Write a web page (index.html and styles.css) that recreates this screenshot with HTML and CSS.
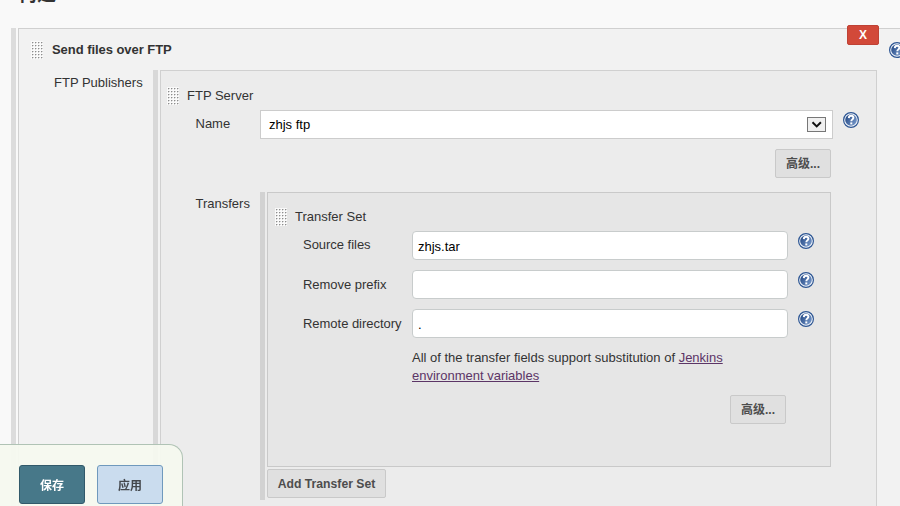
FILE: index.html
```
<!DOCTYPE html>
<html lang="zh-CN">
<head>
<meta charset="utf-8">
<title>构建</title>
<link rel="stylesheet" href="styles.css">
</head>
<body>
<svg class="defs" aria-hidden="true">
  <defs>
    <linearGradient id="blue" x1="0" y1="0" x2="1" y2="0.6"><stop offset="0" stop-color="#1f4480"/><stop offset="1" stop-color="#6f91c4"/></linearGradient>
    <symbol id="help" viewBox="0 0 16 16">
      <circle cx="8" cy="8" r="7.4" fill="#f4f7fb" stroke="#2c5593" stroke-width="1.2"/>
      <circle cx="8" cy="8" r="5.8" fill="url(#blue)"/>
      <path d="M5.8 6.1C5.9 4.4 7 3.8 8.1 3.8c1.3 0 2.3.8 2.3 2 0 1.5-2.1 1.7-2.1 3.4" fill="none" stroke="#fff" stroke-width="1.9"/>
      <rect x="7.3" y="10.4" width="2" height="2" fill="#fff"/>
    </symbol>
    <pattern id="dots" width="3" height="3" patternUnits="userSpaceOnUse"><rect width="3" height="3" fill="#fafafa"/><rect x="1" y="1" width="1" height="1" fill="#8d8d8d"/><rect x="2" y="1" width="1" height="1" fill="#d0d0d0"/><rect x="1" y="2" width="1" height="1" fill="#d8d8d8"/></pattern>
    <symbol id="grip" viewBox="0 0 12 18"><rect width="12" height="18" fill="url(#dots)"/></symbol>
  </defs>
</svg>
<h2 class="heading">构建</h2>
<main class="group builder">
  <section class="panel builder-panel">
    <button class="close">X</button>
    <svg class="help builder-help"><use href="#help"/></svg>
    <header class="title builder-title"><svg class="grip"><use href="#grip"/></svg><b>Send files over FTP</b></header>
    <div class="publishers">
      <div class="label publishers-label">FTP Publishers</div>
      <div class="group publisher-group">
        <section class="panel server-panel">
          <header class="title"><svg class="grip"><use href="#grip"/></svg><span>FTP Server</span></header>
          <div class="row server-row">
            <div class="label server-label">Name</div>
            <div class="select"><span>zhjs ftp</span><span class="arrow"><svg viewBox="0 0 17 13"><path d="M4.5 4.2l4.2 4.2 4.2-4.2" fill="none" stroke="#111" stroke-width="2"/></svg></span></div>
            <svg class="help"><use href="#help"/></svg>
          </div>
          <div class="actions server-actions"><button class="button">高级...</button></div>
          <div class="row">
            <div class="label server-label transfers-label">Transfers</div>
            <div class="group transfer-group">
              <section class="panel transfer-panel">
                <header class="title"><svg class="grip"><use href="#grip"/></svg><span>Transfer Set</span></header>
                <div class="row field"><div class="label">Source files</div><div class="input">zhjs.tar</div><svg class="help"><use href="#help"/></svg></div>
                <div class="row field"><div class="label">Remove prefix</div><div class="input"></div><svg class="help"><use href="#help"/></svg></div>
                <div class="row field"><div class="label">Remote directory</div><div class="input">.</div><svg class="help"><use href="#help"/></svg></div>
                <p class="note">All of the transfer fields support substitution of <a href="#">Jenkins environment variables</a></p>
                <div class="actions transfer-actions"><button class="button">高级...</button></div>
              </section>
              <button class="button add">Add Transfer Set</button>
            </div>
          </div>
        </section>
      </div>
    </div>
  </section>
</main>
<footer class="savebar"><button class="save">保存</button><button class="apply">应用</button></footer>
</body>
</html>
```
FILE: styles.css
```
* { box-sizing: border-box; }
body {
  margin: 0; height: 506px; overflow: hidden; background: #f9f9f9; color: #333;
  font: 13px/18px "Liberation Sans", "Noto Sans CJK SC", sans-serif;
  display: flex; flex-direction: column;
}
svg { display: block; }
button { font: inherit; margin: 0; padding: 0; }
.defs { position: absolute; width: 0; height: 0; }
.heading { flex: none; margin: -19px 0 0 18px; height: 47px; font-size: 19px; line-height: 28px; }
.group { border-left: 5px solid #dcdcdc; padding-left: 2px; }
.builder { flex: none; margin-left: 11px; width: 905px; height: 500px; }
.panel { position: relative; border: 1px solid #d0d0d0; }
.builder-panel { height: 500px; background: #f2f2f2; }
.title { display: flex; align-items: center; height: 20px; gap: 8px; margin-left: -1px; }
.transfer-panel .title { margin-left: 0; }
.grip { width: 12px; height: 18px; flex: none; }
.title.builder-title { margin: 11px 0 0 12px; }
.builder-title { gap: 9px; letter-spacing: -.05px; }
.builder-title .grip { margin-top: -1px; }
.publishers { display: flex; margin-top: 10px; }
.label { flex: none; line-height: 18px; }
.publishers-label { width: 134px; padding: 4px 0 0 35px; white-space: nowrap; }
.publisher-group { width: 724px; border-left-color: #d8d8d8; }
.server-panel { height: 460px; background: #ececec; padding: 15px 0 0 7px; }
.row { display: flex; align-items: flex-start; }
.server-row { margin-top: 4px; }
.server-label { width: 92px; padding: 5px 0 0 27.5px; }
.transfers-label { padding-top: 3px; }
.select {
  width: 573px; height: 29px; background: #fff; border: 1px solid #ccc; color: #000;
  display: flex; align-items: center; justify-content: space-between; padding: 0 6px 0 8px;
}
.arrow { width: 19px; height: 15px; border: 1px solid #777; background: #f0f0f0; }
.arrow svg { width: 17px; height: 13px; }
.help { width: 16px; height: 16px; flex: none; margin: 2px 0 0 10px; }
.actions { display: flex; justify-content: flex-end; }
.server-actions { margin: 10px 45px 14px 0; }
.button {
  width: 56px; height: 29px; background: #e0e0e0; border: 1px solid #c9c9c9; border-radius: 2px;
  color: #4d4d4d; font-weight: bold; font-size: 12px;
}
.transfer-group { width: 571px; height: 308px; border-left-color: #d2d2d2; }
.transfer-panel { height: 275px; background: #e6e6e6; border-color: #c9c9c9; padding: 14px 0 0 7px; margin-bottom: 2px; }
.field { margin-top: 4px; height: 29px; padding-left: 28px; }
.field + .field { margin-top: 10px; }
.field .label { width: 109px; padding-top: 5px; letter-spacing: -.03px; }
.field + .field .label { padding-top: 6px; }
.input { width: 376px; height: 29px; border: 1px solid #c8cccc; border-radius: 4px; background: #fff; color: #000; line-height: 29px; padding-left: 5px; }
.note { margin: 11px 0 0 137px; width: 340px; }
.note a { color: #5c3566; text-underline-offset: 1px; }
.transfer-actions { margin: 10px 44px 0 0; }
.add { width: 119px; font-size: 12.2px; }
.close {
  position: absolute; left: 828px; top: -4px; width: 32px; height: 20px; background: #d24939;
  border: 1px solid #bf4235; border-radius: 2px; color: #fff; font-weight: bold; font-size: 12px; line-height: 18px;
}
.builder-help { position: absolute; left: 870px; top: 13px; margin: 0; }
.savebar {
  position: fixed; left: 0; bottom: 0; width: 183px; height: 62px; padding: 20px 0 0 19px; display: flex; gap: 12px;
  background: rgba(245, 249, 239, .95); border: solid #b0c3b5; border-width: 1px 1px 0 0; border-radius: 0 14px 0 0;
}
.save, .apply { width: 66px; height: 39px; padding-top: 2px; border-radius: 3px; font-weight: bold; font-size: 12px; }
.save { background: #477889; border: 1px solid #31596a; color: #fff; }
.apply { background: #cadcee; border: 1px solid #6f99bd; color: #44484d; }
```
